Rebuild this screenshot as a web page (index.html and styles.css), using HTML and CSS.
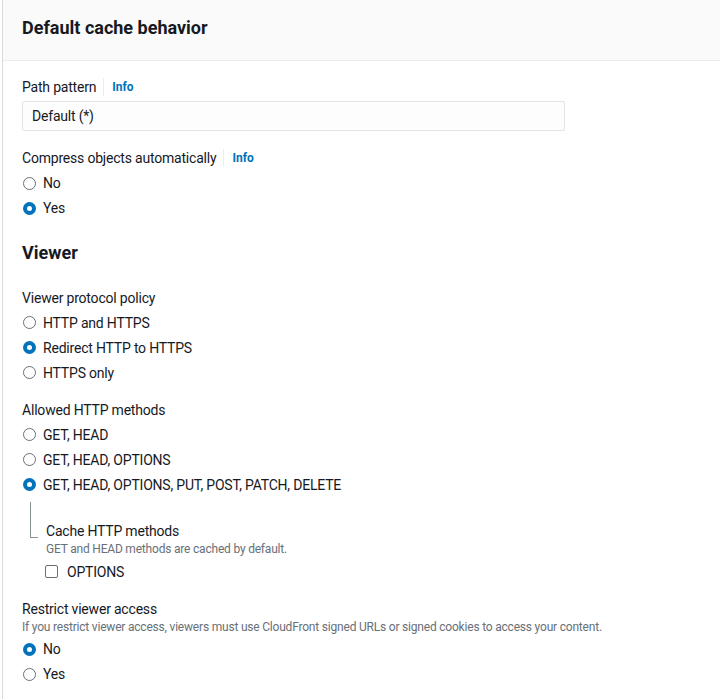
FILE: index.html
```html
<!DOCTYPE html>
<html>
<head>
<meta charset="utf-8">
<link rel="stylesheet" href="styles.css">
</head>
<body>
<div class="panel">
  <div class="panel-header"><h2 class="title">Default cache behavior</h2></div>
  <div class="panel-body">
    <div class="field field-first">
      <div class="label-row"><span class="label">Path pattern</span><span class="sep"></span><span class="info">Info</span></div>
      <div class="input">Default (*)</div>
    </div>
    <div class="field field-compress">
      <div class="label-row"><span class="label">Compress objects automatically</span><span class="sep"></span><span class="info">Info</span></div>
      <div class="radios">
        <div class="radio"><span class="dot"></span><span>No</span></div>
        <div class="radio"><span class="dot on"></span><span>Yes</span></div>
      </div>
    </div>
    <h3 class="section">Viewer</h3>
    <div class="field field-vpp">
      <div class="label">Viewer protocol policy</div>
      <div class="radios">
        <div class="radio"><span class="dot"></span><span>HTTP and HTTPS</span></div>
        <div class="radio"><span class="dot on"></span><span>Redirect HTTP to HTTPS</span></div>
        <div class="radio"><span class="dot"></span><span>HTTPS only</span></div>
      </div>
    </div>
    <div class="field field-ahm">
      <div class="label">Allowed HTTP methods</div>
      <div class="radios">
        <div class="radio"><span class="dot"></span><span>GET, HEAD</span></div>
        <div class="radio"><span class="dot"></span><span>GET, HEAD, OPTIONS</span></div>
        <div class="radio"><span class="dot on"></span><span>GET, HEAD, OPTIONS, PUT, POST, PATCH, DELETE</span></div>
      </div>
      <div class="sub">
        <div class="tree"></div>
        <div class="sub-body">
          <div class="label">Cache HTTP methods</div>
          <div class="desc">GET and HEAD methods are cached by default.</div>
          <div class="check-row"><span class="box"></span><span>OPTIONS</span></div>
        </div>
      </div>
    </div>
    <div class="field field-rva">
      <div class="label">Restrict viewer access</div>
      <div class="desc">If you restrict viewer access, viewers must use CloudFront signed URLs or signed cookies to access your content.</div>
      <div class="radios">
        <div class="radio"><span class="dot on"></span><span>No</span></div>
        <div class="radio"><span class="dot"></span><span>Yes</span></div>
      </div>
    </div>
  </div>
</div>
</body>
</html>
```
FILE: styles.css
```css
html, body {
  margin: 0;
  padding: 0;
  background: #ffffff;
}
body {
  font-family: Roboto, "Liberation Sans", Arial, sans-serif;
  font-size: 14px;
  letter-spacing: -0.2px;
  color: #16191f;
  height: 699px;
  overflow: hidden;
}
.panel {
  margin-left: 2px;
  border-left: 1px solid #d9dcdc;
  min-height: 699px;
}
.panel-header {
  height: 60px;
  background: #fafafa;
  border-bottom: 1px solid #eaeded;
  display: flex;
  align-items: center;
  padding-left: 19px;
}
.title {
  margin: 0;
  font-size: 18px;
  font-weight: 700;
  line-height: 24px;
  letter-spacing: 0;
  margin-top: -4px;
}
.panel-body {
  padding: 16px 19px 0 19px;
}
.label-row {
  display: flex;
  align-items: center;
  height: 20px;
}
.label {
  line-height: 20px;
  height: 20px;
}
.sep {
  width: 1px;
  height: 18px;
  background: #eaeded;
  margin: 0 8px 0 7px;
}
.info {
  color: #0073bb;
  font-weight: 700;
  font-size: 12px;
  letter-spacing: 0;
}
.input {
  margin-top: 4px;
  width: 543px;
  height: 30px;
  box-sizing: border-box;
  border: 1px solid #e3e4e4;
  border-radius: 2px;
  background: #fdfdfd;
  padding-left: 9px;
  line-height: 28px;
}
.field-compress { margin-top: 17px; }
.radios {
  margin-top: 2.5px;
  display: flex;
  flex-direction: column;
}
.radio {
  height: 25px;
  display: flex;
  align-items: center;
}
.dot {
  width: 13px;
  height: 13px;
  box-sizing: border-box;
  border-radius: 50%;
  border: 1.5px solid #687078;
  margin-left: 1px;
  margin-right: 7px;
  flex: none;
}
.dot.on {
  border: 4px solid #0073bb;
}
.section {
  margin: 20px 0 0 0;
  font-size: 18px;
  font-weight: 700;
  line-height: 24px;
  letter-spacing: 0;
}
.field-vpp { margin-top: 23px; }
.field-ahm { margin-top: 14.5px; }
.sub {
  display: flex;
  margin-top: 4.5px;
}
.tree {
  margin-left: 8px;
  width: 7px;
  height: 35px;
  border-left: 1px solid #879596;
  border-bottom: 1px solid #879596;
  flex: none;
}
.sub-body {
  margin-left: 8px;
  padding-top: 19px;
}
.desc {
  color: #687078;
  font-size: 12px;
  line-height: 16px;
}
.check-row {
  margin-top: 3px;
  height: 24px;
  display: flex;
  align-items: center;
}
.box {
  width: 13px;
  height: 13px;
  box-sizing: border-box;
  border: 1.5px solid #687078;
  border-radius: 2px;
  margin-left: -1px;
  margin-right: 9px;
}
.field-rva { margin-top: 15px; }
.field-rva .radios { margin-top: 2px; }
```
